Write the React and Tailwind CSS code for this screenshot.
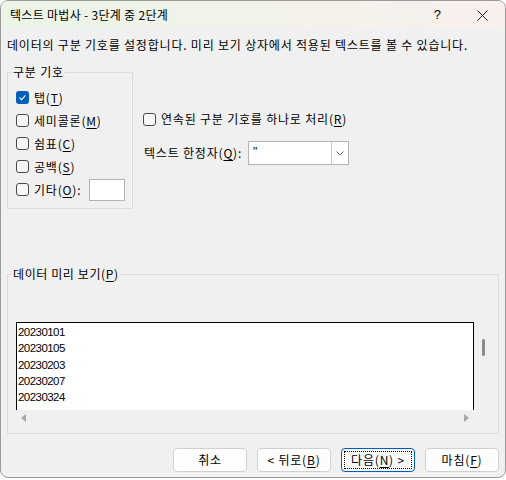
import React from 'react';

function Box({ checked }) {
  if (checked) {
    return (
      <span className="w-[13px] h-[13px] rounded-[3px] bg-[#005fb8] flex items-center justify-center shrink-0">
        <svg width="9" height="9" viewBox="0 0 9 9">
          <path d="M1.6 4.7 L3.6 6.6 L7.4 2.4" stroke="white" strokeWidth="1.1" fill="none" />
        </svg>
      </span>
    );
  }
  return <span className="w-[13px] h-[13px] rounded-[3px] border border-[#4a4a4a] bg-[#f8f8f8] shrink-0" />;
}

function U({ c }) {
  return (
    <>
      (<span className="underline underline-offset-[2px]">{c}</span>)
    </>
  );
}

function Check({ checked, children }) {
  return (
    <div className="h-[23px] flex items-center">
      <Box checked={checked} />
      <span className="ml-[5px]">{children}</span>
    </div>
  );
}

function Btn({ children, focus }) {
  return (
    <div
      className={
        'relative w-[74px] h-[24px] rounded-[4px] border bg-[#fdfdfd] flex items-center justify-center text-[12px] ' +
        (focus ? 'border-[#005fb8]' : 'border-[#d0d0d0]')
      }
    >
      {focus && <div className="absolute inset-[2px] border border-dotted border-black" />}
      <span>{children}</span>
    </div>
  );
}

export default function App() {
  return (
    <div className="w-[506px] h-[480px] bg-white">
      <div className="w-[506px] h-[478px] rounded-[8px] border border-[#9a9a9a] bg-[#f0f0f0] overflow-hidden flex flex-col text-black text-[12px] leading-[16px] tracking-[0.8px] font-['Noto_Sans_CJK_KR','Noto_Sans',sans-serif]">
        {/* title bar */}
        <div className="h-[28px] shrink-0 flex items-center pl-[9px] bg-linear-to-r from-[#ebf4e7] to-[#f9f0ed]">
          <span className="text-[12px] tracking-[0.3px]">텍스트 마법사 - 3단계 중 2단계</span>
          <span className="ml-auto text-[13px] tracking-normal font-['Liberation_Sans',sans-serif] mr-[36px]">?</span>
          <svg width="11" height="11" viewBox="0 0 11 11" className="mr-[17px]">
            <path d="M0.5 0.5 L10.5 10.5 M10.5 0.5 L0.5 10.5" stroke="#222" strokeWidth="1" />
          </svg>
        </div>

        {/* body */}
        <div className="flex flex-col px-[6px] pt-[8px]">
          <div className="h-[16px] whitespace-nowrap">데이터의 구분 기호를 설정합니다. 미리 보기 상자에서 적용된 텍스트를 볼 수 있습니다.</div>

          <div className="flex mt-[19px]">
            <div className="relative w-[126px] h-[137px] border border-[#dcdcdc] pl-[8px] pt-[13px] flex flex-col">
              <span className="absolute left-[4px] top-[-9px] px-[1px] bg-[#f0f0f0]">구분 기호</span>
              <Check checked>
                탭<U c="T" />
              </Check>
              <Check>
                세미콜론<U c="M" />
              </Check>
              <Check>
                쉼표<U c="C" />
              </Check>
              <Check>
                공백<U c="S" />
              </Check>
              <div className="h-[23px] flex items-center">
                <Box />
                <span className="ml-[5px] w-[55px] whitespace-nowrap">
                  기타<U c="O" />:
                </span>
                <div className="w-[36px] h-[22px] border border-[#b4b4b4] bg-white" />
              </div>
            </div>

            <div className="ml-[10px] pt-[37px] flex flex-col">
              <div className="h-[20px] flex items-center">
                <Box />
                <span className="ml-[5px] whitespace-nowrap">
                  연속된 구분 기호를 하나로 처리<U c="R" />
                </span>
              </div>
              <div className="mt-[12px] h-[24px] flex items-center pl-[1px]">
                <span className="w-[104px] whitespace-nowrap">
                  텍스트 한정자<U c="Q" />:
                </span>
                <div className="w-[101px] h-[24px] border border-[#b4b4b4] bg-white flex">
                  <div className="flex-1 pl-[4px] leading-[20px] font-['Liberation_Sans',sans-serif]">"</div>
                  <div className="w-[17px] border-l border-[#c8c8c8] flex items-center justify-center">
                    <svg width="8" height="5" viewBox="0 0 8 5">
                      <path d="M0.5 0.5 L4 4 L7.5 0.5" stroke="#666" strokeWidth="1" fill="none" />
                    </svg>
                  </div>
                </div>
              </div>
            </div>
          </div>

          {/* preview group */}
          <div className="relative mt-[65px] w-[492px] h-[160px] border border-[#dcdcdc] pl-[8px] pt-[47px] flex flex-col">
            <span className="absolute left-[4px] top-[-9px] px-[1px] bg-[#f0f0f0] text-[12px] tracking-[0.6px]">
              데이터 미리 보기<U c="P" />
            </span>
            <div className="flex">
              <div className="w-[458px] h-[88px] border-l border-t border-r border-black bg-white pl-[1px] pt-[1px] font-['Liberation_Sans',sans-serif] text-[11.5px] leading-[16.3px] tracking-[-0.55px]">
                <div>20230101</div>
                <div>20230105</div>
                <div>20230203</div>
                <div>20230207</div>
                <div>20230324</div>
              </div>
              <div className="ml-[8px] mt-[17px] w-[3px] h-[17px] rounded-[2px] bg-[#8a8a8a]" />
            </div>
            <div className="mt-[4px] h-[8px] flex items-center pl-[5px] w-[458px]">
              <svg width="5" height="8" viewBox="0 0 5 8">
                <path d="M5 0 L0 4 L5 8 Z" fill="#a6a6a6" />
              </svg>
              <svg width="5" height="8" viewBox="0 0 5 8" className="ml-auto mr-[5px]">
                <path d="M0 0 L5 4 L0 8 Z" fill="#a6a6a6" />
              </svg>
            </div>
          </div>

          {/* buttons */}
          <div className="mt-[14px] flex justify-end gap-[10px]">
            <Btn>취소</Btn>
            <Btn>
              &lt; 뒤로<U c="B" />
            </Btn>
            <Btn focus>
              다음<U c="N" /> &gt;
            </Btn>
            <Btn>
              마침<U c="F" />
            </Btn>
          </div>
        </div>
      </div>
    </div>
  );
}
